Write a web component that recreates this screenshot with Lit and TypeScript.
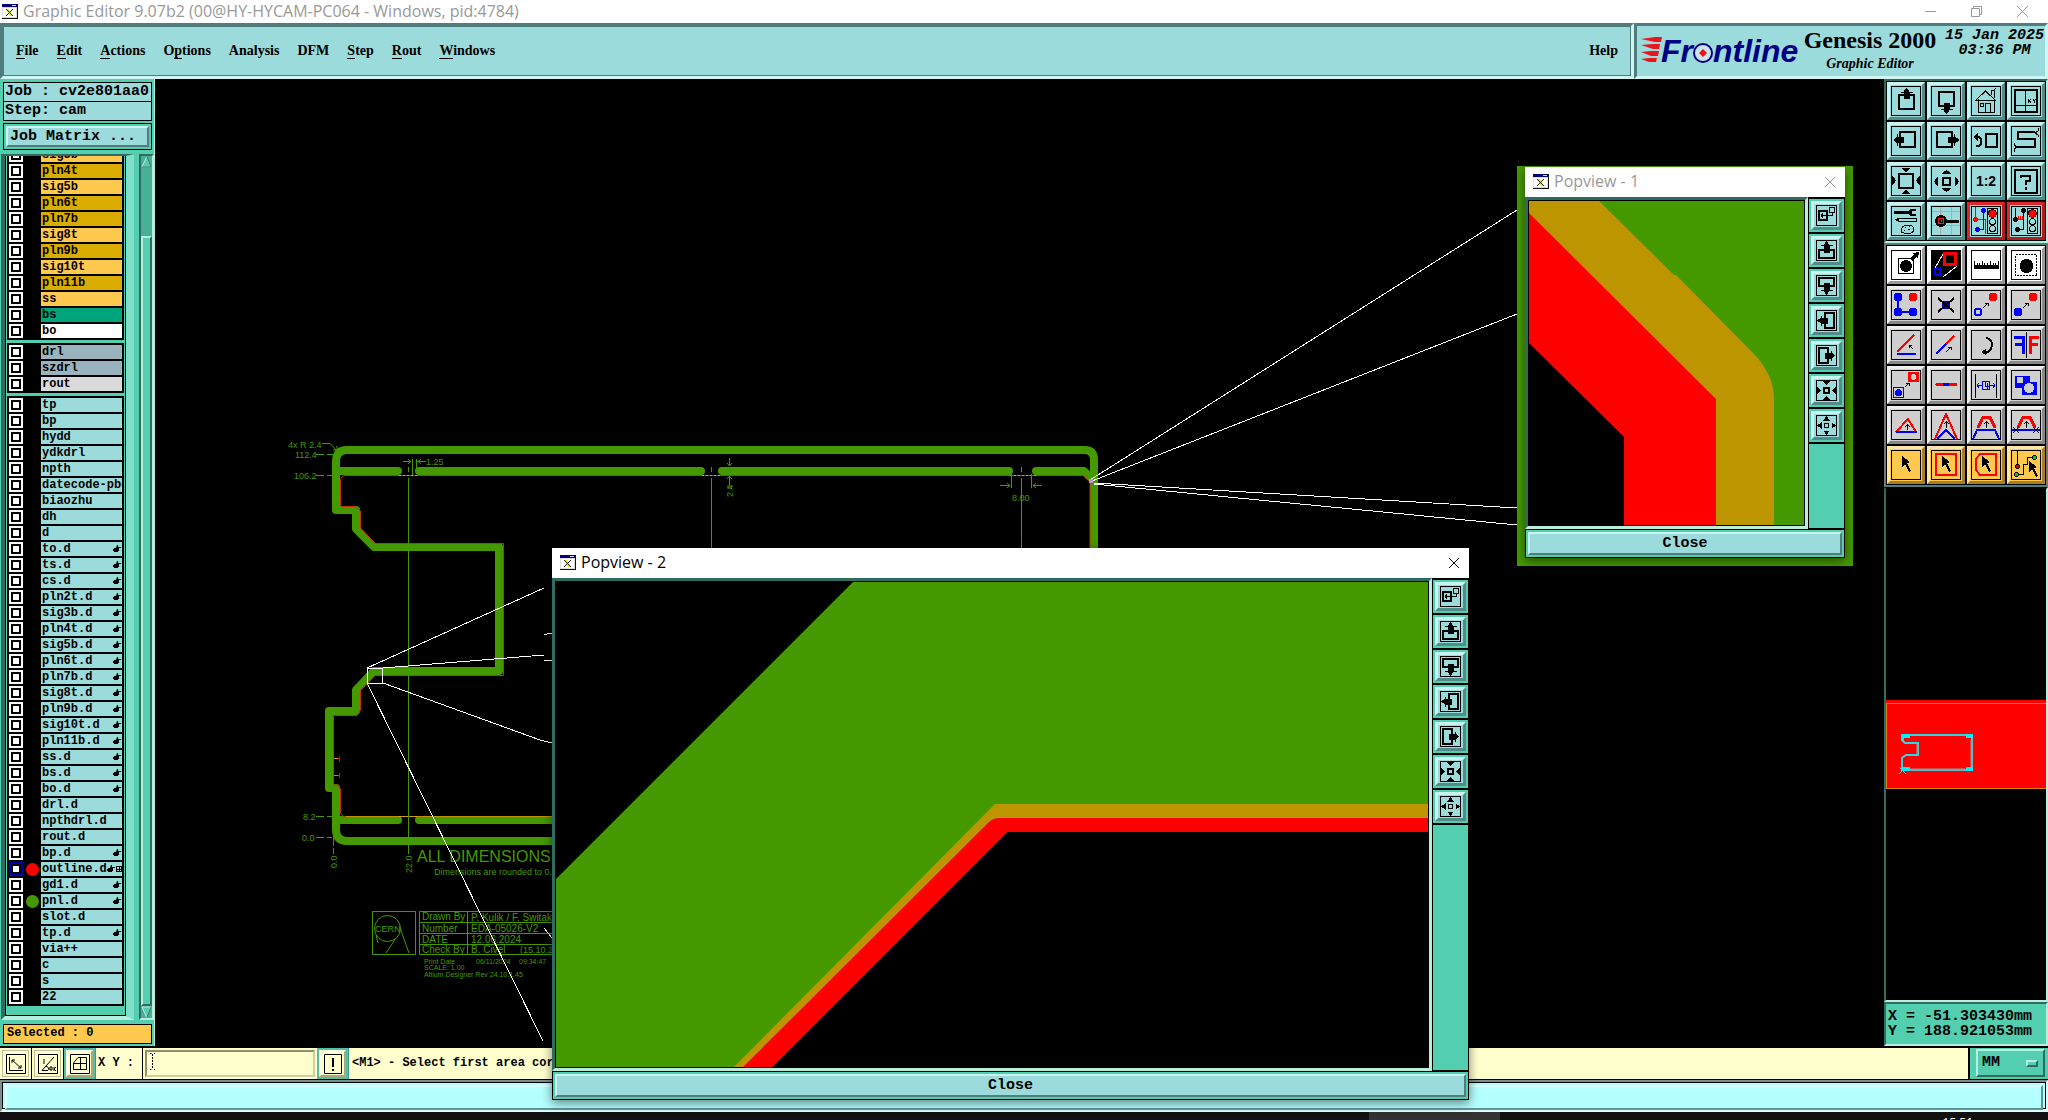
import { LitElement, html, svg, css, nothing, TemplateResult } from "lit";
import { customElement, property } from "lit/decorators.js";
import { classMap } from "lit/directives/class-map.js";

const GREEN = "#459900";
const GOLD = "#bd9500";
const RED = "#ff0000";
const BLUE = "#0000ff";

const shared = css`
  * {
    box-sizing: border-box;
  }
  button,
  input,
  select {
    font: inherit;
    color: inherit;
    margin: 0;
    padding: 0;
    border: 0;
    border-radius: 0;
    background: none;
  }
  svg {
    display: block;
  }
`;

const appIcon = svg`<svg width="16" height="16" viewBox="0 0 16 16" aria-hidden="true">
  <rect x="0" y="0" width="16" height="15" fill="#111"/><rect x="0" y="0" width="15" height="14" fill="#ddd"/>
  <rect x="0" y="0" width="15" height="3" fill="#00007b"/><rect x="10" y="1" width="4" height="1" fill="#ddd"/>
  <rect x="1" y="4" width="13" height="9" fill="#fff"/>
  <path d="M4 5H7L11 12H8Z" fill="#e8e800"/><path d="M4 5L11 12M11 5L4 12" stroke="#222" stroke-width="1"/>
</svg>`;

const up = (x: number, y: number) => svg`<path d="M${x} ${y}l2 2l1 2h3v1h-3v6h-6v-6h-3v-1h3l1 -2z"/>`;
const down = (x: number, y: number) => svg`<path d="M${x} ${y}l2 -2l1 -2h3v-1h-3v-6h-6v6h-3v1h3l1 2z"/>`;
const left = (x: number, y: number) => svg`<path d="M${x} ${y}l2 -2l2 -1v-3h1v3h6v6h-6v3h-1v-3l-2 -1z"/>`;
const right = (x: number, y: number) => svg`<path d="M${x} ${y}l-2 -2l-2 -1v-3h-1v3h-6v6h6v3h1v-3l2 -1z"/>`;

/* ---- small view icons, 21 x 21 ---- */
const popIcons: [string, TemplateResult][] = [
  ["Zoom area", svg`<rect x="3" y="6" width="8" height="9" fill="none" stroke="#000" stroke-width="2"/><rect x="13.500" y="2.500" width="5" height="5" fill="none" stroke="#000"/><path d="M5 10.500H16.500V8M5 10.500l2 -2M5 10.500l2 2" fill="none" stroke="#000"/>`],
  ["Pan up", svg`<rect x="3" y="10" width="15" height="8" fill="none" stroke="#000" stroke-width="2"/><path d="M10.500 1l3 4h3v1h-3v7h-6v-7h-3v-1h3z"/>`],
  ["Pan down", svg`<rect x="3" y="3" width="15" height="8" fill="none" stroke="#000" stroke-width="2"/><path d="M10.500 20l3 -4h3v-1h-3v-7h-6v7h-3v1h3z"/>`],
  ["Pan left", svg`<rect x="9" y="3" width="9" height="15" fill="none" stroke="#000" stroke-width="2"/><path d="M1 10.500l4 -3v-2h1v2h6v6h-6v2h-1v-2z"/>`],
  ["Pan right", svg`<rect x="3" y="3" width="9" height="15" fill="none" stroke="#000" stroke-width="2"/><path d="M19 10.500l-3 -3v-2h-1v2h-6v6h6v2h1v-2z"/>`],
  ["Zoom out", svg`<rect x="8" y="8" width="5" height="5" fill="none" stroke="#000" stroke-width="2"/><path d="M6 1H15L10.500 5ZM6 20H15L10.500 16ZM1 6V15L5 10.500ZM20 6V15L16 10.500Z"/>`],
  ["Zoom in", svg`<rect x="8.500" y="8.500" width="4" height="4" fill="none" stroke="#000"/><path d="M7 5.500H14L10.500 1ZM7 15.500H14L10.500 20ZM5.500 7V14L1 10.500ZM15.500 7V14L20 10.500Z"/>`],
];

/* ---- toolbox icons, 30 x 30 ---- */
const box = (x: number, y: number, w: number, h: number) =>
  svg`<rect x=${x} y=${y} width=${w} height=${h} fill="none" stroke="#000" stroke-width="2"/>`;
const pointer = (x: number, y: number) => svg`<path d="M${x} ${y}l8 6l-3 1l4 8l-2 1l-4 -8l-3 3z"/>`;
const lamp = svg`<rect x="16.500" y="2.500" width="10" height="25" fill="none" stroke="#000"/><circle cx="21.500" cy="7.500" r="4" fill="red" stroke="#400"/><circle cx="21.500" cy="15.500" r="3" fill="none" stroke="#000"/><circle cx="21.500" cy="22.500" r="3" fill="none" stroke="#000"/>`;
const tiny = (x: number, y: number, dx: number, dy: number) =>
  svg`<path d="M${x} ${y}l${dx} ${dy}M${x + dx} ${y + dy}h${-Math.sign(dx) * 3}M${x + dx} ${y + dy}v${-Math.sign(dy) * 3}" stroke="#000" fill="none"/>`;
const rise = svg`<path d="M15.500 18V12M13 14l2.500 -2.500l2.500 2.500" fill="none" stroke="#000"/>`;

type Tool = [string, string, TemplateResult];
const viewTools: Tool[] = [
  ["Pan up", "", svg`${box(8, 9, 15, 14)}${up(15.5, 2)}`],
  ["Pan down", "", svg`${box(8, 6, 15, 14)}${down(15.5, 28)}`],
  ["Home view", "", svg`<path d="M4 15L14.500 5L25 15M7 13V26H23V13M4.500 14.500H24.500M20.500 9V4.500H23.500V12M23 4l2 -2M14.500 26V17.500H19.500V26M9.500 17.500h3v3h-3z" fill="none" stroke="#000"/>`],
  ["Window coordinates", "", svg`<rect x="4" y="4" width="22" height="22" fill="none" stroke="#000" stroke-width="2"/><path d="M14.500 3V27M3 19.500H27" stroke="#000"/><path d="M17 13l3 4M20 13l-3 4M22 13l1.500 2l1.500 -2M23.500 15v2" stroke="#000" fill="none"/>`],
  ["Pan left", "", svg`${box(9, 6, 15, 15)}${left(2, 14)}`],
  ["Pan right", "", svg`${box(6, 6, 15, 15)}${right(28, 14)}`],
  ["Previous view", "", svg`${box(15, 8, 11, 13)}<path d="M2 11l5 -4v3h2l2 3v5l-3 3h-3v-2h2l2 -2v-3l-1 -2h-1v3z"/>`],
  ["Serpent", "", svg`<path d="M24 6H7V13H24V21H5" fill="none" stroke="#000" stroke-width="2"/><path d="M27 2v3l-3 2l3 2v2M3 17v2l3 2l-3 2v3" fill="none" stroke="#000"/>`],
  ["Zoom out", "", svg`${box(8, 8, 14, 14)}<path d="M10 2H20L15 6ZM10 28H20L15 24ZM1 9V20L5 14.500ZM29 9V20L25 14.500Z"/>`],
  ["Zoom in", "", svg`${box(12, 12, 7, 7)}<path d="M10 8H21L15.500 4ZM10 22H21L15.500 26ZM7 10V21L3 15.500ZM24 10V21L28 15.500Z"/>`],
  ["Scale 1:2", "", svg`<text x="15" y="20" text-anchor="middle" class="ratio">1:2</text>`],
  ["Help", "", svg`${box(4, 4, 22, 23)}<path d="M10 12V10H19V15H15V19M15 21v3" fill="none" stroke="#000" stroke-width="2"/>`],
  ["Setup", "", svg`<path d="M3 5h14l2 -2h6v2h-4v3h4v2h-6l-2 -2H3zM7 15l-4 -1l4 -2h19v4H7zM9 12v4" fill="#000"/><path d="M8 13h17v2H8z" fill="#9cdbdb"/><path d="M11 22c2 -4 11 -4 12 1c-1 1 0 4 -3 4h-7c-4 0 -3 -4 -2 -5zM14 21h1M18 20h1M13 24h1M17 24l2 -1" fill="none" stroke="#000"/>`],
  ["Grid snap", "", svg`<path d="M9.500 1V29M20.500 1V29M1 5.500H29M1 19.500H29" stroke="#b7a9ab"/><circle cx="10" cy="15" r="6"/><path d="M15 14h13v3h-13z"/><path d="M7.500 12.500h5v5h-5zM10 14v2" fill="none" stroke="#e22"/>`],
  ["Net lights", "alert", svg`${lamp}<path d="M4.500 1V13.500H14.500V28" fill="none" stroke="red"/><path d="M12.500 4V23.500H6" fill="none" stroke=${BLUE}/><circle cx="12.500" cy="4.500" r="2.500" fill="#00f"/><circle cx="4.500" cy="13.500" r="2.500" fill="red"/><circle cx="6.500" cy="23.500" r="2.500" fill="#00f"/>`],
  ["Spacing lights", "alert", svg`${lamp}<path d="M4.500 2V13M12.500 4V23.500H6" fill="none" stroke="#000"/><circle cx="12.500" cy="4.500" r="2.500"/><circle cx="4.500" cy="13.500" r="2.500"/><circle cx="6.500" cy="23.500" r="2.500"/><path d="M6 13.500h6M7.500 10v3M9.500 10v3M11.500 10v3" stroke="red"/>`],
];
const editTools: Tool[] = [
  ["Select feature", "white", svg`<rect x="7.500" y="8.500" width="15" height="15" fill="none" stroke="#000"/><circle cx="15" cy="16" r="6"/><path d="M19 8l4 -3l-1 -2l6 -1l-1 6l-2 -1l-4 4z"/>`],
  ["Popview", "white", svg`<rect width="30" height="30"/><path d="M4 18L12 4M12 27L26 16" stroke="#fff"/><rect x="13.500" y="3.500" width="11" height="11" fill="none" stroke="red" stroke-width="3"/><rect x="4" y="19" width="5" height="6" fill="none" stroke="#00f" stroke-width="2"/>`],
  ["Measure", "white", svg`<path d="M3 15h25v4H3z"/><path d="M3.500 11v5M6.500 13v3M8.500 13v3M11.500 11v5M13.500 13v3M16.500 13v3M19.500 11v5M22.500 13v3M24.500 13v3M27.500 11v5" stroke="#000"/>`],
  ["Select by area", "white", svg`<rect x="4.500" y="4.500" width="21" height="21" fill="none" stroke="#000" stroke-dasharray="2 1"/><circle cx="15.500" cy="16" r="7"/>`],
  ["Copy nodes", "gray", svg`<path d="M7 7V22H22" fill="none" stroke="#00f" stroke-width="2"/><circle cx="7" cy="7" r="4.500" fill="#00f"/><circle cx="7" cy="22" r="4.500" fill="#00f"/><circle cx="22" cy="22" r="4.500" fill="#00f"/><circle cx="22" cy="7" r="4.500" fill="red"/>`],
  ["Delete", "gray", svg`<circle cx="15" cy="15" r="4.500" fill="#00c"/><path d="M7 8L23 22M23 8L7 22" stroke="#000" stroke-width="2"/>`],
  ["Copy feature", "gray", svg`<circle cx="7" cy="22" r="3.500" fill="none" stroke="#00f" stroke-width="2"/><circle cx="22" cy="7" r="4.500" fill="red"/>${tiny(12, 18, 5, -5)}`],
  ["Move feature", "gray", svg`<circle cx="7" cy="22" r="4.500" fill="#00f"/><circle cx="22" cy="7" r="4.500" fill="red"/>${tiny(12, 18, 5, -5)}`],
  ["Rotate", "gray", svg`<path d="M6 22L23 5" stroke="red" stroke-width="2"/><path d="M6 24H25" stroke="#00f" stroke-width="2"/>${tiny(22, 19, -4, -4)}`],
  ["Stretch", "gray", svg`<path d="M5 24L15 14" stroke="#00f" stroke-width="2"/><path d="M15 14L23 6" stroke="red" stroke-width="2"/>${tiny(15, 22, 5, -5)}`],
  ["Turn", "gray", svg`<path d="M15 8C23 9 23 21 14 23" fill="none" stroke="#000" stroke-width="2"/><path d="M10 22l5 -3v6z"/>`],
  ["Mirror", "gray", svg`<path d="M3 7h9V24M4 14h8" fill="none" stroke="#00f" stroke-width="3"/><path d="M28 7H19V24M19 14h8" fill="none" stroke="red" stroke-width="3"/><path d="M15.500 2V28" stroke="#000"/>`],
  ["Resize", "gray", svg`<rect x="17" y="2" width="11" height="10" fill="red"/><circle cx="22.500" cy="7" r="3" fill="#cfcfcf"/><rect x="2.500" y="17.500" width="10" height="10" fill="none" stroke="#00f"/><circle cx="7.500" cy="22.500" r="3.500" fill="#00f"/>${tiny(14, 17, 4, -4)}`],
  ["Break line", "gray", svg`<path d="M6 14.500H25" stroke="red" stroke-width="3" stroke-linecap="round"/><path d="M12 14.500h6" stroke="#00f" stroke-width="3"/>`],
  ["Space", "gray", svg`<path d="M4.500 4V28M25.500 4V28" stroke="#000"/><path d="M6 15.500H11M19 15.500H24M8 13l-2 2l2 3M22 13l2 2l-2 3M11.500 11.500h7v8h-7zM14.500 12v4h3M16.500 13v6" fill="none" stroke="#00f"/>`],
  ["Merge", "gray", svg`<path d="M4 6H19V12H26V25H11V18H4Z" fill="#00f"/><circle cx="9" cy="10" r="3.500" fill="#cfcfcf"/><circle cx="18" cy="18" r="5" fill="#cfcfcf"/>`],
  ["Corner", "gray", svg`<path d="M5 22L17 9L25 22" fill="none" stroke="red" stroke-width="2"/><path d="M5 22H26" stroke="#00f" stroke-width="2"/><path d="M16.500 20V15M14 17l2.500 -2.500l2.500 2.500" fill="none" stroke="#000"/>`],
  ["Peak", "gray", svg`<path d="M4 29L15 4L26 29" fill="none" stroke="red" stroke-width="2"/><path d="M6 29L15 20L24 29" fill="none" stroke="#00f" stroke-width="2"/>${rise}`],
  ["Trapeze", "gray", svg`<path d="M7 18L12 7H19L24 18" fill="none" stroke="red" stroke-width="3"/><path d="M2 29L6 20H24L28 29" fill="none" stroke="#00f" stroke-width="2"/>${rise}`],
  ["Trim trapeze", "gray", svg`<path d="M7 18L12 7H19L24 18" fill="none" stroke="red" stroke-width="3"/><path d="M1 20H29" stroke="#00f" stroke-width="2"/><path d="M2 17l6 6M8 17l-6 6M22 17l6 6M28 17l-6 6" stroke="#000"/>${rise}`],
  ["Pick", "orange", pointer(11, 6)],
  ["Pick in frame", "orange", svg`<rect x="5" y="4" width="20" height="21" fill="none" stroke="red" stroke-width="2"/>${pointer(11, 6)}`],
  ["Pick in polygon", "orange", svg`<path d="M9 4H25V25H9L5 20V9Z" fill="none" stroke="red" stroke-width="2"/>${pointer(11, 6)}`],
  ["Pick net", "orange", svg`<path d="M6.500 1V17M5 24.500H12.500V14.500H16.500V7.500H23" fill="none" stroke="#000"/><circle cx="6.500" cy="16.500" r="2" fill="#d00" stroke="#000"/><circle cx="5.500" cy="24.500" r="2" fill="#0c0" stroke="#000"/><circle cx="23.500" cy="7.500" r="2" fill="#0c0" stroke="#000"/>${pointer(18, 11)}`],
];

@customElement("pop-view")
class PopView extends LitElement {
  @property() name = "";
  @property({ type: Boolean }) active = false;

  static styles = [
    shared,
    css`
      :host {
        display: flex;
        flex-direction: column;
        background: #53cfb0;
        font-family: "Open Sans", "Noto Sans", sans-serif;
        box-shadow: 0 3px 10px rgba(0, 0, 0, 0.5);
      }
      .title {
        height: 30px;
        flex: none;
        display: flex;
        align-items: center;
        gap: 5px;
        padding: 0 8px 1px;
        background: #fff;
        color: #999;
        font-size: 16px;
        line-height: 20px;
      }
      .title.active {
        color: #000;
      }
      .name {
        flex: 1;
        padding-bottom: 2px;
      }
      .x {
        width: 14px;
        height: 14px;
      }
      .body {
        flex: 1;
        min-height: 0;
        display: flex;
      }
      .frame {
        flex: 1;
        min-width: 0;
        border: 3px solid;
        border-color: #2f6b60 #b8eedd #b8eedd #2f6b60;
        display: flex;
      }
      .view {
        flex: 1;
        border: 1px solid #000;
        background: #000;
        overflow: hidden;
      }
      .tools {
        width: 37px;
        border: 1px solid #000;
        border-top-width: 2px;
      }
      .tool {
        display: block;
        width: 100%;
        height: 35px;
        padding: 2px;
        border-bottom: 2px solid #000;
      }
      .face {
        display: grid;
        place-items: center;
        height: 100%;
        background: #9cdbdb;
        border: 3px solid;
        border-color: #c8f4f2 #4f8c8a #4f8c8a #c8f4f2;
      }
      .foot {
        flex: none;
        height: 29px;
        padding: 2px;
        border: 1px solid #000;
      }
      .close {
        display: block;
        width: 100%;
        height: 100%;
        background: #9cdbdb;
        border: 2px solid;
        border-color: #c8f4f2 #4f7d80 #4f7d80 #c8f4f2;
        font: bold 15px/20px "Liberation Mono", monospace;
        color: #000;
      }
    `,
  ];

  render() {
    return html`
      <div class=${classMap({ title: true, active: this.active })}>
        ${appIcon}<span class="name">${this.name}</span>
        <button class="x" aria-label="Close window">
          <svg width="14" height="14"><path d="M2 2L12 12M12 2L2 12" stroke="currentColor" /></svg>
        </button>
      </div>
      <div class="body">
        <div class="frame"><div class="view"><slot></slot></div></div>
        <div class="tools">
          ${popIcons.map(
            ([label, icon]) => html`<button class="tool" aria-label=${label}>
              <span class="face"
                ><svg width="21" height="21" viewBox="0 0 21 21" shape-rendering="crispEdges">
                  <rect x="0.5" y="0.5" width="20" height="20" fill="none" stroke="#000" />${icon}
                </svg></span
              >
            </button>`
          )}
        </div>
      </div>
      <div class="foot"><button class="close">Close</button></div>
    `;
  }
}

interface Layer {
  name: string;
  tone?: string;
  hand?: boolean;
  dot?: string;
  grid?: boolean;
  on?: boolean;
}

const board: Layer[] = [
  ["sig3b", "amber"], ["pln4t", "ochre"], ["sig5b", "amber"], ["pln6t", "ochre"], ["pln7b", "ochre"],
  ["sig8t", "amber"], ["pln9b", "ochre"], ["sig10t", "amber"], ["pln11b", "ochre"], ["ss", "amber"],
  ["bs", "jade"], ["bo", "white"],
].map(([name, tone]) => ({ name, tone }));
const drill: Layer[] = [
  { name: "drl", tone: "slate" },
  { name: "szdrl", tone: "slate" },
  { name: "rout", tone: "silver" },
];
const plain = (names: string): Layer[] => names.split(" ").map((name) => ({ name }));
const handed = (names: string): Layer[] => names.split(" ").map((name) => ({ name, hand: true }));
const misc: Layer[] = [
  ...plain("tp bp hydd ydkdrl npth datecode-pbd biaozhu dh d"),
  ...handed("to.d ts.d cs.d pln2t.d sig3b.d pln4t.d sig5b.d pln6t.d pln7b.d sig8t.d pln9b.d sig10t.d pln11b.d ss.d bs.d bo.d"),
  ...plain("drl.d npthdrl.d rout.d"),
  ...handed("bp.d"),
  { name: "outline.d", hand: true, grid: true, dot: "red", on: true },
  ...handed("gd1.d"),
  { name: "pnl.d", hand: true, dot: "green" },
  ...plain("slot.d"),
  ...handed("tp.d"),
  ...plain("via++ c s 22"),
];

const handIcon = svg`<svg width="8" height="8" viewBox="0 0 8 8" aria-hidden="true"><path d="M4 0h1v2h3v1H6v3H5v1H1V6H0V4h1V3h2z"/></svg>`;
const gridIcon = svg`<svg width="6" height="6" viewBox="0 0 6 6" aria-hidden="true" shape-rendering="crispEdges"><path d="M0.500 0.500H5.500V5.500H0.500ZM3 0V5M0 3H5" fill="none" stroke="#000"/></svg>`;

const menus: [string, number][] = [
  ["File", 0], ["Edit", 0], ["Actions", 0], ["Options", 1], ["Analysis", -1], ["DFM", -1],
  ["Step", 0], ["Rout", 0], ["Windows", 0],
];

@customElement("app-root")
class AppRoot extends LitElement {
  static styles = [
    shared,
    css`
      :host {
        position: relative;
        display: flex;
        flex-direction: column;
        height: 100vh;
        overflow: hidden;
        background: #000;
        color: #000;
        font-family: "Liberation Mono", monospace;
      }
      .titlebar {
        flex: none;
        height: 23px;
        display: flex;
        align-items: center;
        gap: 5px;
        padding: 0 5px 0 2px;
        background: #fff;
        color: #999;
        font: 16px/20px "Open Sans", "Noto Sans", sans-serif;
      }
      .caption {
        flex: 1;
        padding-bottom: 2px;
      }
      .winbtn {
        width: 41px;
        height: 22px;
        display: grid;
        place-items: center;
      }
      .top {
        flex: none;
        height: 56px;
        display: flex;
      }
      .bar {
        border: 3px solid;
        border-color: #4f7c7c #d0f6f4 #d0f6f4 #4f7c7c;
        background: #9cdbdb;
      }
      .menubar {
        flex: 1;
        margin: 0;
        display: flex;
        align-items: center;
        gap: 18px;
        padding: 0 13px;
        font: bold 14px/18px "Liberation Serif", serif;
        outline: 1px solid #4f7c7c;
        outline-offset: -4px;
      }
      .help {
        margin-left: auto;
      }
      .mn {
        border-bottom: 1px solid #000;
      }
      .brand {
        width: 414px;
        flex: none;
        display: flex;
        align-items: center;
        padding-left: 4px;
      }
      .word {
        font: italic bold 32px "Liberation Sans", sans-serif;
        fill: #000084;
      }
      .product {
        width: 138px;
        text-align: center;
        font: bold 14px/22px "Liberation Serif", serif;
      }
      .product strong {
        display: block;
        font-size: 24px;
        line-height: 26px;
        white-space: nowrap;
      }
      .clock {
        margin-left: auto;
        padding: 0 1px 16px 0;
        text-align: center;
        white-space: nowrap;
        font: italic bold 15px/15px "Liberation Mono", monospace;
      }
      .main {
        flex: 1;
        min-height: 0;
        display: flex;
      }

      .left {
        width: 155px;
        flex: none;
        display: flex;
        flex-direction: column;
        background: #53cfb0;
        padding: 3px 2px 2px 3px;
        border-right: 1px solid #b8eedd;
      }
      .info {
        height: 20px;
        margin-bottom: -1px;
        border: 1px solid #000;
        background: #9cdbdb;
        font: bold 15px/18px "Liberation Mono", monospace;
        padding-left: 1px;
        white-space: pre;
        overflow: hidden;
      }
      .matrix {
        margin: 3px 0 4px;
        height: 27px;
        padding: 2px;
        border: 1px solid #000;
      }
      .matrix button {
        width: 100%;
        height: 21px;
        background: #9cdbdb;
        border: 2px solid;
        border-color: #c8f4f2 #4f7d80 #4f7d80 #c8f4f2;
        font: bold 15px/17px "Liberation Mono", monospace;
        text-align: left;
        padding-left: 2px;
      }
      .browser {
        flex: 1;
        min-height: 0;
        display: flex;
        gap: 5px;
        margin: 0 0 4px -2px;
      }
      .listframe {
        width: 133px;
        flex: none;
        display: flex;
        border: 4px solid;
        border-width: 2px 8px 4px 4px;
        border-color: #2f6b60 #7fdfc8 #b8eedd #2f6b60;
      }
      .list {
        flex: 1;
        min-width: 0;
        min-height: 0;
        overflow: hidden;
        display: flex;
        flex-direction: column;
        justify-content: flex-end;
        gap: 3px;
        padding: 0 1px 9px;
        border: 1px solid #000;
        border-top: 0;
      }
      .group {
        flex: none;
        background: #000;
        padding: 2px 2px 0;
      }
      .row {
        display: flex;
        height: 16px;
      }
      .row input {
        appearance: none;
        width: 6px;
        height: 6px;
        margin: 4px;
        background: #fff;
        box-shadow: 0 0 0 2px #000, 0 0 0 4px #fff;
      }
      .row input:checked {
        box-shadow: 0 0 0 2px #000, 0 0 0 4px #0000a8;
      }
      .swatch {
        width: 18px;
        flex: none;
        padding: 1px 0 0 3px;
      }
      .dot {
        display: block;
        width: 13px;
        height: 13px;
        border-radius: 50%;
      }
      .dot.red {
        background: #f00;
      }
      .dot.green {
        background: #459900;
      }
      .cell {
        flex: 1;
        min-width: 0;
        height: 14px;
        display: flex;
        align-items: center;
        justify-content: space-between;
        overflow: hidden;
        background: #9cdbdb;
        padding: 0 1px;
        font: bold 12px/14px "Liberation Mono", monospace;
        white-space: nowrap;
      }
      .marks {
        display: flex;
        align-items: center;
        gap: 1px;
      }
      .cell.amber {
        background: #ffc84e;
      }
      .cell.ochre {
        background: #dbac00;
      }
      .cell.jade {
        background: #00a57b;
      }
      .cell.white {
        background: #fff;
      }
      .cell.slate {
        background: #9ab4bf;
      }
      .cell.silver {
        background: #dadada;
      }
      .scroll {
        width: 15px;
        display: flex;
        flex-direction: column;
        background: #48b096;
        border: 2px solid;
        border-color: #2f6b60 #b8eedd #b8eedd #2f6b60;
      }
      .thumb {
        flex: 1;
        margin-top: 68px;
        background: #53cfb0;
        border: 2px solid;
        border-color: #b8eedd #2f6b60 #2f6b60 #b8eedd;
      }
      .selected {
        height: 20px;
        border: 1px solid #000;
        background: #ffc84e;
        font: bold 12px/17px "Liberation Mono", monospace;
        padding-left: 3px;
        white-space: pre;
      }

      .canvas {
        flex: 1;
        min-width: 0;
        overflow: hidden;
      }
      .cad {
        font: 9px "Liberation Sans", sans-serif;
        fill: #459900;
      }
      .cad .mid {
        font-size: 10px;
      }
      .cad .big {
        font-size: 16px;
      }
      .cad .fine {
        font-size: 7px;
      }

      .right {
        width: 164px;
        flex: none;
        display: flex;
        flex-direction: column;
        background: #000;
      }
      .toolbox {
        display: grid;
        grid-template-columns: repeat(4, 38px);
        gap: 2px;
        padding: 1px;
        border: 2px solid;
        border-color: #2f6b60 #b8eedd #b8eedd #2f6b60;
        background: #000;
      }
      .toolbox.edit {
        border-color: #4d8078 #777 #4d8078 #777;
      }
      .tool {
        width: 38px;
        height: 38px;
        display: grid;
        place-items: center;
        background: #9cdbdb;
        border: 3px solid;
        border-color: #c8f4f2 #4f8c8a #4f8c8a #c8f4f2;
      }
      .tool.alert {
        border-color: #e0262a #b01c20 #b01c20 #e0262a;
      }
      .tool.white {
        background: #fff;
        border-color: #fff #999 #999 #fff;
      }
      .tool.gray {
        background: #cfcfcf;
        border-color: #eee #888 #888 #eee;
      }
      .tool.orange {
        background: #ffc84e;
        border-color: #ffe6a8 #a87f28 #a87f28 #ffe6a8;
      }
      .ratio {
        font: bold 14px "Liberation Sans", sans-serif;
      }
      .overview {
        flex: 1;
        min-height: 0;
        border: 2px solid;
        border-color: #000 #b8eedd #b8eedd #2f6b60;
      }
      .readout {
        height: 44px;
        border: 2px solid;
        border-color: #2f6b60 #b8eedd #b8eedd #2f6b60;
        background: #53cfb0;
        padding: 5px 0 0 2px;
        font: bold 15px/15px "Liberation Mono", monospace;
        white-space: pre;
      }

      .entry {
        flex: none;
        height: 34px;
        display: flex;
        border-top: 2px solid #000;
        border-bottom: 1px solid #000;
        background: #ffffce;
        font: bold 12px/31px "Liberation Mono", monospace;
      }
      .snap {
        width: 32px;
        padding: 2px;
        border-right: 1px solid #000;
      }
      .snap .in {
        display: grid;
        place-items: center;
        height: 100%;
        border: 1px solid #bcbc95;
      }
      .snap.on {
        background: #53bfa4;
        border-right-color: #3f9a84;
      }
      .snap.on .in {
        background: #ffffce;
        border: 2px solid;
        border-color: #ffffe8 #a8a880 #a8a880 #ffffe8;
      }
      .xy {
        width: 46px;
        padding-left: 2px;
        white-space: pre;
      }
      .field {
        position: relative;
        width: 175px;
        padding: 2px;
        border-left: 1px solid #000;
      }
      .field input {
        display: block;
        width: 100%;
        height: 27px;
        padding-left: 8px;
        background: #ffffce;
        border: 2px solid;
        border-color: #8f8f6c #cfcfa2 #cfcfa2 #8f8f6c;
      }
      .caret {
        position: absolute;
        left: 7px;
        top: 5px;
      }
      .message {
        flex: 1;
        padding-left: 3px;
        white-space: pre;
      }
      .unitbox {
        width: 80px;
        padding: 1px 3px 1px 6px;
        border-left: 2px solid #000;
        background: #53cfb0;
        position: relative;
      }
      .unit {
        appearance: none;
        display: block;
        width: 100%;
        height: 28px;
        padding-left: 4px;
        border: 2px solid;
        border-color: #b8eedd #2f6b60 #2f6b60 #b8eedd;
        font: bold 15px/20px "Liberation Mono", monospace;
      }
      .pip {
        position: absolute;
        right: 10px;
        top: 12px;
        width: 12px;
        height: 7px;
        border: 2px solid;
        border-color: #b8eedd #2f6b60 #2f6b60 #b8eedd;
        pointer-events: none;
      }
      .progress {
        flex: none;
        height: 32px;
        border: 2px solid;
        border-color: #7b8f90 #dff #dff #7b8f90;
        background: #b4ffff;
      }
      .progress div {
        height: 27px;
        border: 1px solid #000;
        padding: 2px;
      }
      .progress div::before {
        content: "";
        display: block;
        height: 21px;
        border: 2px solid;
        border-color: #dff #5f9698 #5f9698 #dff;
      }
      .taskbar {
        flex: none;
        height: 8px;
        overflow: hidden;
        display: flex;
        justify-content: flex-end;
        background: #111;
        color: #fff;
        font: 12px/16px "Open Sans", sans-serif;
      }
      .task {
        width: 131px;
        background: #333;
        margin-right: 442px;
      }
      .time {
        padding: 3px 75px 0 0;
      }

      pop-view {
        position: absolute;
      }
      .pop1 {
        left: 1525px;
        top: 167px;
        width: 320px;
        height: 391px;
      }
      .pop2 {
        left: 552px;
        top: 548px;
        width: 917px;
        height: 552px;
      }
    `,
  ];

  private group(layers: Layer[]) {
    return html`<div class="group">
      ${layers.map(
        (l) => html`<label class="row"
          ><input type="checkbox" .checked=${!!l.on} /><span class="swatch"
            >${l.dot ? html`<i class="dot ${l.dot}"></i>` : nothing}</span
          ><span class="cell ${l.tone ?? ""}"
            ><span>${l.name}</span
            >${l.hand ? html`<span class="marks">${handIcon}${l.grid ? gridIcon : nothing}</span>` : nothing}</span
          ></label
        >`
      )}
    </div>`;
  }

  private tools(list: Tool[]) {
    return list.map(
      ([label, tone, icon]) => html`<button class="tool ${tone}" aria-label=${label}>
        <svg width="30" height="30" viewBox="0 0 30 30" shape-rendering="crispEdges">
          ${icon}<rect x="0.5" y="0.5" width="29" height="29" fill="none" stroke="#000" />
        </svg>
      </button>`
    );
  }

  private drawing() {
    return html`<svg width="100%" height="100%">
      <g transform="translate(-155 -79)" fill="none">
        <g stroke=${GREEN} stroke-width="8" stroke-linejoin="round">
          <path d="M560 841H347Q336 841 336 829V788H329V711H356V690L374 671H499V547H374L356 529V510H336V462Q336 450 347 450H1085Q1094 450 1094 460V560" />
          <path stroke-linecap="round" d="M336 471H398M419 471H701M722 471H1009M1036 471H1084L1090 477M336 820H398M419 820H560" />
        </g>
        <g stroke="#c83000" stroke-width="1">
          <path d="M340.500 506V480Q341 475.500 346 475.500H1083L1090 482V548M341 506.500H355L360.500 511V528L375 543.500H503.500V675.500H375L360.500 690V710L357 715.500H333.500V785H337L340.500 789V812Q341 816.500 346 816.500" />
          <path d="M334 758.500H340M339.500 756V762M334 775.500H340M339.500 773V778" stroke=${RED} />
        </g>
        <path d="M346 816.500H560M334 775.500H338M334 758.500H338" stroke=${GOLD} />
        <g stroke="#e0a020" stroke-dasharray="2 2"><path d="M399 475.500H418M702 475.500H722M1010 475.500H1036M399 816.500H418" /></g>
        <g stroke=${GREEN}>
          <path d="M408.500 467V472M408.500 478V854M711.500 467V472M711.500 478V548M1021.500 467V472M1021.500 478V548" />
          <path d="M322 443.500H330L337 451M333 450h4v-4M316 454.500H324M327 454.500H334M316 475.500H324M327 475.500H332" />
          <path d="M403 461.500H411M408 459l3 2.500l-3 2.500M412.500 459V475M416.500 459V470M417 461.500H426M421 459l-3 2.500l3 2.500" />
          <path d="M729.500 458V466M727 463l2.500 3l2.500 -3M729.500 476V486M727 479l2.500 -3l2.500 3M727 488H732" />
          <path d="M1011.500 474V488M1031.500 474V488M1000 485.500H1010M1007 483l3 2.500l-3 2.500M1033 485.500H1042M1036 483l-3 2.500l3 2.500" />
          <path d="M316 816.500H324M327 816.500H332M316 837.500H324M327 837.500H332M333.500 830V846M333.500 848V854" />
          <path d="M372.500 911.500H415.500V954.500H372.500ZM560 911.500H419.500V954.500H560M419.500 922.500H560M419.500 933.500H560M419.500 944.500H560M467.500 911V954" />
          <circle cx="387.500" cy="928.500" r="13" />
          <path d="M400 928L409 953M396 938L386 953M376 935L378 943" />
        </g>
        <g class="cad">
          <text x="288" y="448">4x R 2.4</text>
          <text x="295" y="458">112.4</text>
          <text x="294" y="479">106.2</text>
          <text x="426" y="465">1.25</text>
          <text transform="translate(733 497) rotate(-90)">2.4</text>
          <text x="1012" y="501">8.00</text>
          <text x="303" y="820">8.2</text>
          <text x="302" y="841">0.0</text>
          <text transform="translate(337 868) rotate(-90)">0.0</text>
          <text transform="translate(412 873) rotate(-90)">22.0</text>
          <text x="417" y="862" class="big">ALL DIMENSIONS ARE</text>
          <text x="434" y="875">Dimensions are rounded to 0.1</text>
          <text x="375" y="932">CERN</text>
          <g class="mid">
            <text x="422" y="920">Drawn By</text>
            <text x="471" y="921">P. Kulik / F. Switakowski</text>
            <text x="422" y="932">Number</text>
            <text x="471" y="932">EDA-05026-V2</text>
            <text x="422" y="943">DATE</text>
            <text x="471" y="943">12.06.2024</text>
            <text x="422" y="953">Check By</text>
            <text x="471" y="953">B. Civel</text>
          </g>
          <text x="520" y="953">(15.10.2024)</text>
          <g class="fine">
            <text x="424" y="964">Print Date</text>
            <text x="476" y="964">06/11/2024</text>
            <text x="519" y="964">09:34:47</text>
            <text x="424" y="970">SCALE: 1.00</text>
            <text x="424" y="977">Altium Designer Rev 24.10.1.45</text>
          </g>
        </g>
        <rect x="1517" y="166" width="336" height="400" fill=${GREEN} />
        <g stroke="#fff" shape-rendering="crispEdges">
          <path d="M367.500 668.500H382.500V683.500H367.500Z" />
          <path d="M367 668L544 588M383 668L544 655M383 683L540 740L552 743M367 683L543 1041M544 634.500L552 633M544 660.500H552M544 928L552 938" />
          <path d="M1090 480L1517 210M1092 481L1517 314M1094 483L1517 508M1094 484L1517 525" />
        </g>
        <rect x="1089" y="479" width="4" height="4" fill="#b0a0c0" />
      </g>
    </svg>`;
  }

  render() {
    return html`
      <header class="titlebar">
        ${appIcon}<span class="caption">Graphic Editor 9.07b2 (00@HY-HYCAM-PC064 - Windows, pid:4784)</span>
        <button class="winbtn" aria-label="Minimize"><svg width="11" height="11"><path d="M0 5.500H11" stroke="#999" /></svg></button>
        <button class="winbtn" aria-label="Restore">
          <svg width="11" height="11" fill="none" stroke="#999"><path d="M0.500 2.500H8.500V10.500H0.500ZM2.500 2V0.500H10.500V8.500H9" /></svg>
        </button>
        <button class="winbtn" aria-label="Close"><svg width="11" height="11"><path d="M0 0L11 11M11 0L0 11" stroke="#999" /></svg></button>
      </header>

      <div class="top">
        <nav class="bar menubar">
          ${menus.map(([m, i]) =>
            i < 0
              ? html`<button>${m}</button>`
              : html`<button>${m.slice(0, i)}<span class="mn">${m[i]}</span>${m.slice(i + 1)}</button>`
          )}
          <button class="help">Help</button>
        </nav>
        <div class="bar brand">
          <svg width="160" height="40" viewBox="0 0 160 40" role="img" aria-label="Frontline">
            <g fill="#e8161c">
              <path d="M0 8L14 6H21L20 11H14ZM0 14L12 13H19L18 18H12ZM0 21L10 20H18L17 25H10ZM0 28L8 27H16L15 31H8Z" />
            </g>
            <text class="word" x="20" y="31">Fr</text>
            <text class="word" x="72" y="31">ntline</text>
            <circle cx="62" cy="22" r="9" fill="#c8e4ee" stroke="#000084" stroke-width="2" />
            <path d="M62 18L66 22L62 26L58 22Z" fill="#f01010" />
          </svg>
          <div class="product"><strong>Genesis 2000</strong><em>Graphic Editor</em></div>
          <div class="clock">15 Jan 2025<br />03:36 PM</div>
        </div>
      </div>

      <div class="main">
        <aside class="left">
          <div class="info">Job : cv2e801aa0</div>
          <div class="info">Step: cam</div>
          <div class="matrix"><button>Job Matrix ...</button></div>
          <div class="browser">
            <div class="listframe">
              <div class="list">${this.group(board)}${this.group(drill)}${this.group(misc)}</div>
            </div>
            <div class="scroll">
              <svg width="11" height="12"><path d="M5.500 1L10 11H1Z" fill="#53cfb0" stroke="#b8eedd" /><path d="M6 1L10 11H1" fill="none" stroke="#2f6b60" /></svg>
              <div class="thumb"></div>
              <svg width="11" height="12"><path d="M5.500 11L10 1H1Z" fill="#53cfb0" stroke="#b8eedd" /><path d="M6 11L10 1" stroke="#2f6b60" /></svg>
            </div>
          </div>
          <div class="selected">Selected : 0</div>
        </aside>

        <main class="canvas">${this.drawing()}</main>

        <aside class="right">
          <div class="toolbox">${this.tools(viewTools)}</div>
          <div class="toolbox edit">${this.tools(editTools)}</div>
          <div class="overview">
            <svg width="100%" height="100%">
              <g transform="translate(-1886 -489)">
                <rect x="1886" y="700" width="160" height="89" fill="#f00" />
                <path d="M1886 703.500H2046M1886 788.500H2046M1886.500 703V789" stroke="#d88010" />
                <g fill="none">
                  <path d="M1902 735H1972V770H1902V758L1906 755H1918V743H1905L1902 740Z" stroke="#28d8e8" stroke-width="2" />
                  <path d="M1971.500 740V766M1910 769.500H1965M1917.500 744V754" stroke="#999" stroke-width="2" />
                  <path d="M1899 767l7 7M1906 767l-7 7" stroke="#aaa" />
                </g>
                <path d="M1902 734h8v4h-6v3h-2zM1966 734h7v4h-7zM1966 767h7v4h-7zM1902 767h8v4h-8z" fill="#00f0ff" />
              </g>
            </svg>
          </div>
          <div class="readout">X = -51.303430mm<br />Y = 188.921053mm</div>
        </aside>
      </div>

      <div class="entry">
        <button class="snap" aria-label="Absolute">
          <span class="in"><svg width="20" height="20" fill="none" stroke="#000"><path d="M0.500 0.500H19.500V19.500H0.500ZM3.500 3V16.500H17M6 6L15 14M6 9V6h3M15 11v3h-3" /></svg></span>
        </button>
        <button class="snap" aria-label="Angle">
          <span class="in"><svg width="20" height="20" fill="none" stroke="#000"><path d="M0.500 0.500H19.500V19.500H0.500ZM16 3L4 16.500H10M6 5v5M8 12q3 1 3 4M12 13h2v3h-2zM16 13v4M18 13l-2 2l2 2" /></svg></span>
        </button>
        <button class="snap on" aria-label="Grid">
          <span class="in"><svg width="20" height="20" fill="none" stroke="#000"><path d="M0.500 0.500H19.500V19.500H0.500ZM8 3.500H16.500V15.500H3.500V9ZM10.500 3V16M3 9.500H17" /></svg></span>
        </button>
        <label class="xy" for="xy">X Y :</label>
        <div class="field">
          <input id="xy" type="text" />
          <svg class="caret" width="5" height="18" fill="none" stroke="#000"><path d="M0 0.500H1.500M4 0.500H5M0 16.500H1.500M4 16.500H5M2.500 1V16" stroke-dasharray="2 1" /></svg>
        </div>
        <button class="snap on" aria-label="Alert">
          <span class="in"><svg width="18" height="20" fill="none" stroke="#000"><path d="M0.500 0.500H17.500V19.500H0.500Z" /><path d="M9 4V13M9 15v2" stroke-width="2" /></svg></span>
        </button>
        <div class="message">&lt;M1&gt; - Select first area corner</div>
        <div class="unitbox">
          <select class="unit" aria-label="Units"><option>MM</option><option>INCH</option></select>
          <span class="pip"></span>
        </div>
      </div>
      <div class="progress"><div></div></div>
      <footer class="taskbar"><span class="task"></span><span class="time">15:51</span></footer>

      <pop-view class="pop1" name="Popview - 1">
        <svg width="100%" height="100%">
          <g transform="translate(-1529 -201)">
            <rect x="1529" y="201" width="400" height="400" fill=${GREEN} />
            <path d="M1529 201H1599L1674 275H1676L1752 352Q1774 374 1774 399V600H1529Z" fill=${GOLD} />
            <path d="M1529 213L1716 399V600H1529Z" fill=${RED} />
            <path d="M1529 343L1624 437V600H1529Z" fill="#000" />
          </g>
        </svg>
      </pop-view>
      <pop-view class="pop2" name="Popview - 2" active>
        <svg width="100%" height="100%">
          <g transform="translate(-556 -582)">
            <path d="M556 879L853 582H1500V810H1005L735 1080H556Z" fill=${GREEN} />
            <path d="M995 804H1500V832H1007L759 1080H721L992 807Z" fill=${GOLD} />
            <path d="M1000 818H1500V832H1007L759 1080H730L989 822Q993 818 1000 818Z" fill=${RED} />
          </g>
        </svg>
      </pop-view>
    `;
  }
}
